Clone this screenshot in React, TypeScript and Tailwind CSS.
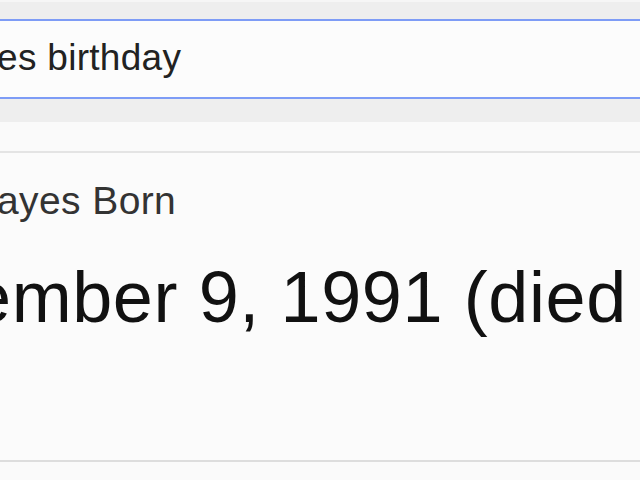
export default function App() {
  return (
    <div className="w-[640px] h-[480px] overflow-hidden bg-[#fafafa] font-['Liberation_Sans',Arial,sans-serif]">
      {/* top bar */}
      <div className="h-[2px] bg-[#f6f6f6]"></div>
      <div className="h-[17px] bg-[#eeeeee]"></div>

      {/* search box */}
      <div className="h-[80px] border-y-2 border-[#7e9cf6] bg-[#fcfcfc] pt-[17px]">
        <div className="ml-[-3px] whitespace-nowrap text-[37px] leading-[40px] tracking-[0.3px] text-[#222222]">es birthday</div>
      </div>

      <div className="h-[23px] bg-[#eeeeee]"></div>
      <div className="h-[29px] bg-[#fafafa]"></div>

      {/* answer card */}
      <div className="h-[311px] border-y-2 border-t-[#e4e4e4] border-b-[#dddddd] bg-[#fbfbfb] pt-[26px]">
        <div className="ml-[-3px] whitespace-nowrap text-[39px] leading-[44px] tracking-[0.4px] text-[#333333]">ayes Born</div>
        <div className="mt-[34px] ml-[-29px] whitespace-nowrap text-[72px] leading-[80px] tracking-[0.6px] text-[#111111]">
          ember 9, 1991 (died
        </div>
      </div>
    </div>
  );
}
